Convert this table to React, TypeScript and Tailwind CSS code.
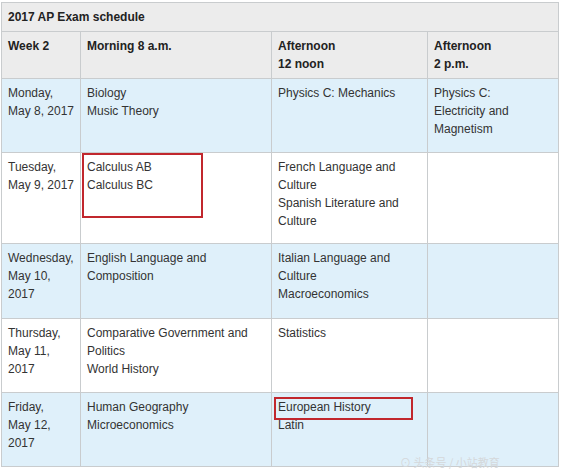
import React from "react";

type Row = {
  day: string[];
  morning: string[];
  noon: string[];
  late: string[];
  height: string;
  blue: boolean;
};

const rows: Row[] = [
  {
    day: ["Monday,", "May 8, 2017"],
    morning: ["Biology", "Music Theory"],
    noon: ["Physics C: Mechanics"],
    late: ["Physics C:", "Electricity and", "Magnetism"],
    height: "h-[74px]",
    blue: true,
  },
  {
    day: ["Tuesday,", "May 9, 2017"],
    morning: ["Calculus AB", "Calculus BC"],
    noon: ["French Language and", "Culture", "Spanish Literature and", "Culture"],
    late: [],
    height: "h-[91px]",
    blue: false,
  },
  {
    day: ["Wednesday,", "May 10,", "2017"],
    morning: ["English Language and", "Composition"],
    noon: ["Italian Language and", "Culture", "Macroeconomics"],
    late: [],
    height: "h-[75px]",
    blue: true,
  },
  {
    day: ["Thursday,", "May 11,", "2017"],
    morning: ["Comparative Government and", "Politics", "World History"],
    noon: ["Statistics"],
    late: [],
    height: "h-[74px]",
    blue: false,
  },
  {
    day: ["Friday,", "May 12,", "2017"],
    morning: ["Human Geography", "Microeconomics"],
    noon: ["European History", "Latin"],
    late: [],
    height: "h-[74px]",
    blue: true,
  },
];

function Lines({ items }: { items: string[] }) {
  return (
    <>
      {items.map((t, i) => (
        <div key={i} className="whitespace-nowrap">
          {t}
        </div>
      ))}
    </>
  );
}

export default function App() {
  const cell = "border border-[#c9ccce] align-top px-[6px] pt-[5px] relative";

  return (
    <div className="relative w-[563px] h-[469px] bg-white overflow-hidden pt-[2px] pl-[1px] font-['Liberation_Sans',Arial,sans-serif] text-[12px] leading-[18px] text-[#333]">
      <table className="table-fixed border-collapse w-[557px]">
        <colgroup>
          <col className="w-[79px]" />
          <col className="w-[191px]" />
          <col className="w-[156px]" />
          <col className="w-[131px]" />
        </colgroup>
        <thead>
          <tr className="h-[29px] bg-[#ececec]">
            <th colSpan={4} className="border border-[#c9ccce] text-left font-bold text-[#222] px-[6px] align-middle">
              2017 AP Exam schedule
            </th>
          </tr>
          <tr className="h-[47px] bg-[#ececec] text-[#222] font-bold text-left">
            <th className={cell + " text-left"}>Week 2</th>
            <th className={cell + " text-left"}>Morning 8 a.m.</th>
            <th className={cell + " text-left"}>
              <div>Afternoon</div>
              <div>12 noon</div>
            </th>
            <th className={cell + " text-left"}>
              <div>Afternoon</div>
              <div>2 p.m.</div>
            </th>
          </tr>
        </thead>
        <tbody>
          {rows.map((r, i) => (
            <tr key={i} className={r.height + " " + (r.blue ? "bg-[#dff0fa]" : "bg-white")}>
              <td className={cell}>
                <Lines items={r.day} />
              </td>
              <td className={cell}>
                <Lines items={r.morning} />
                {i === 1 && (
                  <div className="absolute left-[1px] top-0 w-[121px] h-[65px] border-2 border-[#c1272d]" />
                )}
              </td>
              <td className={cell}>
                <Lines items={r.noon} />
                {i === 4 && (
                  <div className="absolute left-[2px] top-[4px] w-[139px] h-[23px] border-2 border-[#c1272d]" />
                )}
              </td>
              <td className={cell}>
                <Lines items={r.late} />
              </td>
            </tr>
          ))}
        </tbody>
      </table>
      <div className="absolute left-[400px] top-[456px] text-[11px] leading-[12px] text-[#d5d8da] font-['Noto_Sans_CJK_SC',sans-serif] whitespace-nowrap">
        ⊙ 头条号 / 小站教育
      </div>
    </div>
  );
}
